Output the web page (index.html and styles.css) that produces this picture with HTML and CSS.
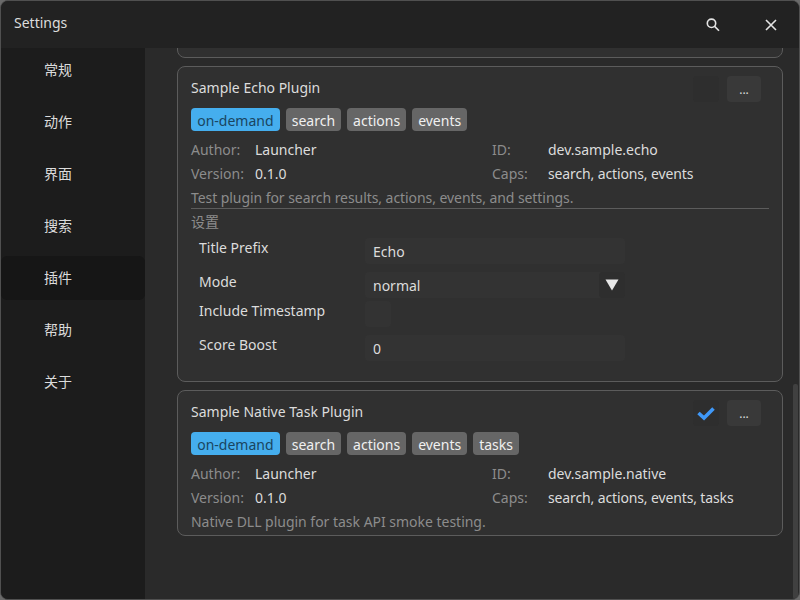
FILE: index.html
```html
<!DOCTYPE html>
<html lang="zh">
<head>
<meta charset="utf-8">
<title>Settings</title>
<link rel="stylesheet" href="styles.css">
</head>
<body>
<div class="window">
  <header class="titlebar">
    <span class="title">Settings</span>
    <div class="tools">
      <svg class="tool" width="16" height="16" viewBox="0 0 16 16"><circle cx="6.5" cy="6.3" r="4.2"/><path d="M9.6 9.4 14 13.8"/></svg>
      <svg class="tool" width="16" height="16" viewBox="0 0 16 16"><path d="M3 3 13 13M13 3 3 13"/></svg>
    </div>
  </header>
  <div class="body">
    <nav class="sidebar">
      <div class="nav">常规</div>
      <div class="nav">动作</div>
      <div class="nav">界面</div>
      <div class="nav">搜索</div>
      <div class="nav active">插件</div>
      <div class="nav">帮助</div>
      <div class="nav">关于</div>
    </nav>
    <main class="content">
      <section class="card stub"></section>
      <section class="card">
        <div class="head">
          <h2 class="name">Sample Echo Plugin</h2>
          <div class="actions"><span class="check"></span><span class="more">...</span></div>
        </div>
        <div class="tags"><span class="tag on">on-demand</span><span class="tag">search</span><span class="tag">actions</span><span class="tag">events</span></div>
        <div class="meta">
          <span class="k">Author:</span><span class="v">Launcher</span><span class="k">ID:</span><span class="v">dev.sample.echo</span>
          <span class="k">Version:</span><span class="v">0.1.0</span><span class="k">Caps:</span><span class="v list">search, actions, events</span>
        </div>
        <p class="desc long">Test plugin for search results, actions, events, and settings.</p>
        <hr class="rule">
        <div class="sect">设置</div>
        <div class="form">
          <label class="lbl">Title Prefix</label><div class="input">Echo</div>
          <label class="lbl">Mode</label>
          <div class="input select">normal<span class="arrow"><svg width="14" height="12" viewBox="0 0 14 12"><path d="M0.5 0.5H13.5L7 11.5Z"/></svg></span></div>
          <label class="lbl pull">Include Timestamp</label><div class="box pull"></div>
          <label class="lbl">Score Boost</label><div class="input">0</div>
        </div>
      </section>
      <section class="card">
        <div class="head">
          <h2 class="name">Sample Native Task Plugin</h2>
          <div class="actions"><span class="check"><svg width="20" height="16" viewBox="0 0 20 16"><path d="M2.5 8 8 13 17.5 3.5"/></svg></span><span class="more">...</span></div>
        </div>
        <div class="tags"><span class="tag on">on-demand</span><span class="tag">search</span><span class="tag">actions</span><span class="tag">events</span><span class="tag">tasks</span></div>
        <div class="meta">
          <span class="k">Author:</span><span class="v">Launcher</span><span class="k">ID:</span><span class="v">dev.sample.native</span>
          <span class="k">Version:</span><span class="v">0.1.0</span><span class="k">Caps:</span><span class="v list">search, actions, events, tasks</span>
        </div>
        <p class="desc">Native DLL plugin for task API smoke testing.</p>
      </section>
      <div class="scrollbar"></div>
    </main>
  </div>
</div>
</body>
</html>
```

FILE: styles.css
```css
* { box-sizing: border-box; }
html, body { margin: 0; height: 100%; background: #6a6a6a; }
body { font-family: "Noto Sans", "Noto Sans CJK SC", sans-serif; font-size: 14px; color: #dcdcdc; }
.window { width: 800px; height: 600px; display: flex; flex-direction: column; background: #2a2a2a; border: 1px solid #505050; border-radius: 8px; overflow: hidden; }
.titlebar { height: 47px; flex: none; display: flex; align-items: center; justify-content: space-between; background: #222222; padding: 0 20px 0 13px; }
.title { color: #dcdcdc; padding-bottom: 4px; }
.tools { display: flex; gap: 42px; }
.tool { fill: none; stroke: #e4e4e4; stroke-width: 1.6; }
.body { flex: 1; display: flex; min-height: 0; }
.sidebar { width: 144px; flex: none; background: #1c1c1c; display: flex; flex-direction: column; gap: 8px; }
.nav { height: 44px; flex: none; line-height: 44px; padding-left: 43px; border-radius: 6px; color: #dcdcdc; }
.active { background: #161616; }
.content { flex: 1; position: relative; overflow: hidden; padding: 0 16px 0 32px; display: flex; flex-direction: column; gap: 8px; }
.card { flex: none; background: #303030; border: 1px solid #5c5c5c; border-radius: 8px; padding: 9px 13px 1px; }
.stub { height: 30px; margin-top: -20px; }
.head { display: flex; justify-content: space-between; height: 32px; padding-right: 8px; }
.name { margin: 0; font-size: 14px; font-weight: 400; line-height: 24px; color: #dcdcdc; }
.actions { display: flex; gap: 8px; height: 26px; }
.check, .more { height: 26px; border-radius: 4px; display: flex; align-items: center; justify-content: center; }
.check { width: 26px; background: #2e2e2e; }
.check svg { fill: none; stroke: #3f98f8; stroke-width: 3.6; }
.more { width: 34px; background: #393939; color: #dcdcdc; font-size: 12px; }
.tags { display: flex; gap: 6px; height: 23px; }
.tag { height: 23px; line-height: 25px; padding: 0 6px; border-radius: 4px; background: #666666; color: #f0f0f0; }
.tag.on { background: #45aeee; color: #1a4560; padding: 0 6.2px; }
.meta { display: grid; grid-template-columns: 64px 237px 56px 1fr; grid-auto-rows: 24px; margin-top: 7px; line-height: 24px; }
.k { color: #8c8c8c; }
.v { color: #dcdcdc; }
.list { letter-spacing: -0.13px; }
.desc { margin: 0; line-height: 24px; color: #8c8c8c; height: 24px; letter-spacing: -0.02px; }
.desc.long { letter-spacing: -0.065px; }
.rule { margin: -2px 0 0; height: 1px; border: 0; background: #5c5c5c; }
.sect { line-height: 26px; color: #8c8c8c; }
.form { display: grid; grid-template-columns: 166px 260px; padding-left: 8px; grid-template-rows: 26px 26px 21px 26px; row-gap: 8px; margin: 3px 0 19px; }
.lbl { line-height: 20px; color: #dcdcdc; }
.pull { margin-top: -5px; }
.input { height: 26px; line-height: 27px; padding-left: 8px; background: #333333; border-radius: 4px; color: #dcdcdc; }
.select { display: flex; justify-content: space-between; }
.arrow { width: 26px; height: 26px; background: #2e2e2e; border-radius: 4px; display: flex; align-items: center; justify-content: center; }
.arrow svg { fill: #e8e8e8; }
.box { width: 26px; height: 26px; background: #333333; border-radius: 4px; }
.scrollbar { position: absolute; right: 1px; top: 336px; bottom: 0; width: 5px; background: #404040; border-radius: 2px; }
```
